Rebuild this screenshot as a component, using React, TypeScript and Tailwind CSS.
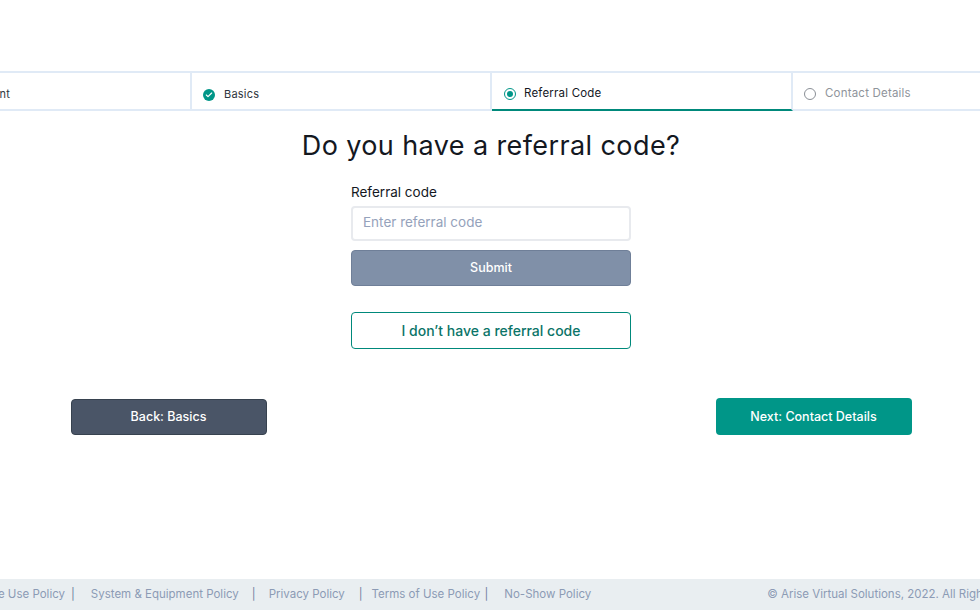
import { Check } from "lucide-react";

const font = "font-['Inter','Liberation_Sans',sans-serif]";

function DoneIcon() {
  return (
    <span className="flex h-[12px] w-[12px] shrink-0 items-center justify-center rounded-full bg-[#009688]">
      <Check className="h-[8px] w-[8px] text-white" strokeWidth={3.5} />
    </span>
  );
}

function ActiveIcon() {
  return (
    <span className="flex h-[12px] w-[12px] shrink-0 items-center justify-center rounded-full border border-[#009688]">
      <span className="h-[6px] w-[6px] rounded-full bg-[#009688]" />
    </span>
  );
}

function TodoIcon() {
  return <span className="h-[12px] w-[12px] shrink-0 rounded-full border border-[#8a8f96]" />;
}

function Stepper() {
  return (
    <div className="flex h-[40px] w-[1200px] border-y-2 border-[#e0eaf6]">
      <div className="flex w-[301px] items-center justify-end border-r-2 border-[#e0eaf6] pr-[180px] pt-[7px] text-[11px] tracking-[0.2px] text-[#2f3640]">
        Assessment
      </div>
      <div className="flex w-[300px] items-center gap-[9px] border-r-2 border-[#e0eaf6] pl-[11px] pt-[7px] text-[11px] tracking-[0.2px] text-[#2f3640]">
        <DoneIcon />
        Basics
      </div>
      <div className="-mb-[2px] flex h-[38px] w-[301px] items-center gap-[8px] border-b-2 border-r-2 border-b-[#00897b] border-r-[#e0eaf6] pl-[12px] pt-[5px] text-[11.5px] tracking-[0.2px] text-[#14181f]">
        <ActiveIcon />
        Referral Code
      </div>
      <div className="flex flex-1 items-center gap-[9px] pl-[11px] pt-[5px] text-[11.5px] tracking-[0.2px] text-[#8f949b]">
        <TodoIcon />
        Contact Details
      </div>
    </div>
  );
}

function ReferralForm() {
  return (
    <div className="flex w-[280px] flex-col">
      <label className="text-[13.5px] leading-[18px] text-[#14181f]">Referral code</label>
      <input
        placeholder="Enter referral code"
        className="mt-[5px] h-[35px] rounded-[4px] border-2 border-[#e8eaee] bg-white px-[10px] pb-[3px] text-[13.5px] outline-none placeholder:text-[#95a2bb]"
      />
      <button className="mt-[9px] h-[36px] rounded-[4px] border border-[#6f7f98] bg-[#8090a8] pt-[1px] text-[12.5px] font-medium text-white">
        Submit
      </button>
      <button className="mt-[26px] h-[37px] rounded-[4px] border border-[#00897b] bg-white text-[14px] font-medium text-[#0b7468]">
        I don’t have a referral code
      </button>
    </div>
  );
}

function Footer() {
  return (
    <div className="flex h-[31px] w-[1200px] items-center bg-[#e9eef1] pt-[1px] text-[11.5px] text-[#8c9bb5]">
      <span className="w-[174px] whitespace-nowrap text-right">Acceptable Use Policy</span>
      <span className="ml-[6px] text-[#6f80a0]">|</span>
      <span className="ml-[16px] w-[152px] whitespace-nowrap">System &amp; Equipment Policy</span>
      <span className="ml-[9px] text-[#6f80a0]">|</span>
      <span className="ml-[13px] w-[76px] whitespace-nowrap">Privacy Policy</span>
      <span className="ml-[14px] text-[#6f80a0]">|</span>
      <span className="ml-[9px] w-[108px] whitespace-nowrap">Terms of Use Policy</span>
      <span className="ml-[5px] text-[#6f80a0]">|</span>
      <span className="ml-[16px] w-[263px] whitespace-nowrap">No-Show Policy</span>
      <span className="whitespace-nowrap">© Arise Virtual Solutions, 2022. All Rights Reserved.</span>
    </div>
  );
}

export default function App() {
  return (
    <div className={`${font} flex h-[610px] w-[980px] flex-col overflow-hidden bg-white`}>
      <div className="-ml-[109px] flex h-full w-[1200px] flex-col">
        <div className="mt-[71px]">
          <Stepper />
        </div>
        <div className="flex flex-col items-center">
          <h1 className="mt-[17px] text-[27px] leading-[36px] tracking-[0.4px] text-[#14181f]">Do you have a referral code?</h1>
          <div className="mt-[19px]">
            <ReferralForm />
          </div>
          <div className="mt-[49px] flex w-[841px] items-center justify-between">
            <button className="mt-[1px] h-[36px] w-[196px] rounded-[4px] border border-[#37424f] bg-[#4a5567] pt-[1px] text-[12.5px] font-medium text-white">
              Back: Basics
            </button>
            <button className="h-[37px] w-[196px] rounded-[4px] bg-[#009688] pt-[1px] text-[12.5px] font-medium text-white">
              Next: Contact Details
            </button>
          </div>
        </div>
        <div className="mt-auto">
          <Footer />
        </div>
      </div>
    </div>
  );
}
